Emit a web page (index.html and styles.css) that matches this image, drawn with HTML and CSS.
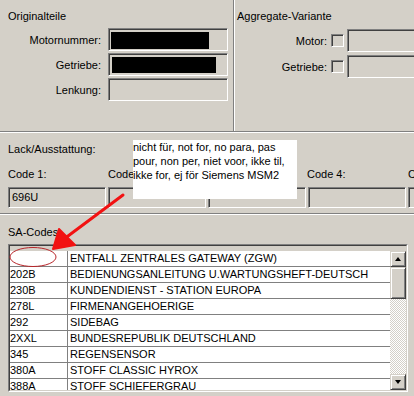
FILE: index.html
```html
<!DOCTYPE html>
<html>
<head>
<meta charset="utf-8">
<link rel="stylesheet" href="styles.css">
</head>
<body>
<div class="page">
  <div class="top">
    <div class="group group-left">
      <div class="title">Originalteile</div>
      <div class="frow">
        <span class="lbl lbl-left">Motornummer:</span>
        <div class="field field-left"><span class="redact redact-a"></span></div>
      </div>
      <div class="frow">
        <span class="lbl lbl-left">Getriebe:</span>
        <div class="field field-left"><span class="redact redact-b"></span></div>
      </div>
      <div class="frow">
        <span class="lbl lbl-left">Lenkung:</span>
        <div class="field field-left"></div>
      </div>
    </div>
    <div class="vsep"></div>
    <div class="group group-right">
      <div class="title">Aggregate-Variante</div>
      <div class="frow frow-right">
        <span class="lbl lbl-right">Motor:</span>
        <span class="check"></span>
        <div class="field field-right"></div>
      </div>
      <div class="frow frow-right">
        <span class="lbl lbl-right">Getriebe:</span>
        <span class="check"></span>
        <div class="field field-right"></div>
      </div>
    </div>
  </div>
  <div class="hsep"></div>

  <div class="lack">
    <div class="title">Lack/Ausstattung:</div>
    <div class="codes">
      <div class="code">
        <div class="code-lbl">Code 1:</div>
        <div class="field code-field">696U</div>
      </div>
      <div class="code">
        <div class="code-lbl">Code 2:</div>
        <div class="field code-field"></div>
      </div>
      <div class="code">
        <div class="code-lbl">Code 3:</div>
        <div class="field code-field"></div>
      </div>
      <div class="code">
        <div class="code-lbl code-lbl-4">Code 4:</div>
        <div class="field code-field"></div>
      </div>
      <div class="code">
        <div class="code-lbl">Code 5:</div>
        <div class="field code-field"></div>
      </div>
    </div>
  </div>
  <div class="hsep hsep-2"></div>

  <div class="sa">
    <div class="title">SA-Codes</div>
    <div class="tablebox">
      <div class="tableinner">
        <div class="thead"></div>
        <div class="tbody">
          <div class="rows">
            <div class="row"><span class="c1"></span><span class="c2">ENTFALL ZENTRALES GATEWAY (ZGW)</span></div>
            <div class="row"><span class="c1">202B</span><span class="c2">BEDIENUNGSANLEITUNG U.WARTUNGSHEFT-DEUTSCH</span></div>
            <div class="row"><span class="c1">230B</span><span class="c2">KUNDENDIENST - STATION EUROPA</span></div>
            <div class="row"><span class="c1">278L</span><span class="c2">FIRMENANGEHOERIGE</span></div>
            <div class="row"><span class="c1">292</span><span class="c2">SIDEBAG</span></div>
            <div class="row"><span class="c1">2XXL</span><span class="c2">BUNDESREPUBLIK DEUTSCHLAND</span></div>
            <div class="row"><span class="c1">345</span><span class="c2">REGENSENSOR</span></div>
            <div class="row"><span class="c1">380A</span><span class="c2">STOFF CLASSIC HYROX</span></div>
            <div class="row"><span class="c1">388A</span><span class="c2">STOFF SCHIEFERGRAU</span></div>
          </div>
          <div class="vscroll">
            <div class="sb-btn"><span class="arr arr-up"></span></div>
            <div class="sb-thumb"></div>
            <div class="sb-track"></div>
            <div class="sb-btn"><span class="arr arr-down"></span></div>
          </div>
        </div>
      </div>
    </div>
  </div>

  <div class="note">nicht für, not for, no para, pas<br>pour, non per, niet voor, ikke til,<br>ikke for, ej för Siemens MSM2</div>

  <svg class="marks" width="414" height="396" viewBox="0 0 414 396">
    <line x1="123" y1="195" x2="64" y2="239" stroke="#f21212" stroke-width="3" stroke-linecap="round"/>
    <polygon points="53,249 59,229 75,245" fill="#f21212" stroke="#f21212" stroke-width="2" stroke-linejoin="round"/>
    <ellipse cx="33" cy="257" rx="23" ry="9.5" fill="none" stroke="#b8262a" stroke-width="1"/>
  </svg>
</div>
</body>
</html>
```

FILE: styles.css
```css
html, body {
  margin: 0;
  padding: 0;
  width: 414px;
  height: 396px;
  overflow: hidden;
  background: #d4d0c8;
}

.page {
  position: relative;
  width: 414px;
  height: 396px;
  overflow: hidden;
  font-family: "Liberation Sans", Arial, sans-serif;
  font-size: 11px;
  color: #000;
  background: #d4d0c8;
}

.title {
  line-height: 14px;
  height: 14px;
  white-space: nowrap;
}

/* ---------- top groups ---------- */
.top {
  display: flex;
  height: 131px;
}

.group-left {
  width: 233px;
  flex: none;
  box-sizing: border-box;
  padding: 9px 0 0 8px;
}

.group-left .title {
  margin-bottom: 5px;
}

.vsep {
  flex: none;
  width: 0;
  border-left: 1px solid #808080;
  border-right: 1px solid #ffffff;
}

.group-right {
  flex: 1;
  box-sizing: border-box;
  padding: 9px 0 0 2px;
  white-space: nowrap;
  overflow: hidden;
}

.group-right .title {
  margin-bottom: 6px;
}

.frow {
  display: flex;
  align-items: center;
  height: 23px;
  margin-bottom: 2px;
}

.frow-right {
  margin-bottom: 3px;
}

.lbl {
  text-align: right;
  flex: none;
  white-space: nowrap;
}

.lbl-left {
  width: 93px;
  margin-right: 7px;
}

.lbl-right {
  width: 90px;
  margin-right: 4px;
}

.field {
  box-sizing: border-box;
  height: 23px;
  background: #d4d0c8;
  border-style: solid;
  border-width: 1px;
  border-color: #808080 #ffffff #ffffff #808080;
  box-shadow: inset 1px 1px 0 #404040, inset -1px -1px 0 #d4d0c8;
  flex: none;
}

.field-left {
  width: 120px;
  position: relative;
}

.field-right {
  width: 90px;
}

.redact {
  display: block;
  background: #000;
}

.redact-a {
  margin: 3px 0 0 2px;
  width: 98px;
  height: 17px;
}

.redact-b {
  margin: 3px 0 0 3px;
  width: 104px;
  height: 16px;
}

.check {
  flex: none;
  box-sizing: border-box;
  width: 13px;
  height: 13px;
  margin-right: 3px;
  background: #d4d0c8;
  border-style: solid;
  border-width: 1px;
  border-color: #808080 #ffffff #ffffff #808080;
  box-shadow: inset 1px 1px 0 #404040, inset -1px -1px 0 #d4d0c8;
}

.hsep {
  height: 0;
  border-top: 1px solid #808080;
  border-bottom: 1px solid #ffffff;
}

/* ---------- Lack ---------- */
.lack {
  padding: 9px 0 0 8px;
  height: 80px;
  box-sizing: border-box;
}

.codes {
  display: flex;
  margin-top: 11px;
  white-space: nowrap;
}

.code {
  flex: none;
  width: 100px;
}

.code-lbl {
  line-height: 14px;
  height: 14px;
  margin-bottom: 6px;
}

.code-lbl-4 {
  margin-left: -1px;
}

.code-field {
  width: 98px;
  height: 21px;
  line-height: 19px;
  padding-left: 3px;
}

/* ---------- SA codes ---------- */
.sa {
  padding: 10px 0 0 8px;
}

.sa .title {
  margin-bottom: 5px;
}

.tablebox {
  box-sizing: border-box;
  width: 400px;
  height: 148px;
  border-style: solid;
  border-width: 1px;
  border-color: #808080 #ffffff #ffffff #808080;
}

.tableinner {
  box-sizing: border-box;
  height: 146px;
  border-style: solid;
  border-width: 1px;
  border-color: #404040 #d4d0c8 #d4d0c8 #404040;
  display: flex;
  flex-direction: column;
  overflow: hidden;
}

.thead {
  height: 5px;
  flex: none;
  background: #d4d0c8;
}

.tbody {
  flex: 1;
  display: flex;
  min-height: 0;
}

.rows {
  flex: 1;
  overflow: hidden;
  background: #fff;
}

.row {
  display: flex;
  box-sizing: border-box;
  height: 16px;
  line-height: 15px;
  border-bottom: 1px solid #808080;
  white-space: nowrap;
}

.c1 {
  flex: none;
  width: 58px;
  box-sizing: border-box;
  padding-left: 0;
  border-right: 1px solid #808080;
}

.c2 {
  padding-left: 2px;
}

.vscroll {
  flex: none;
  width: 16px;
  display: flex;
  flex-direction: column;
}

.sb-btn,
.sb-thumb {
  flex: none;
  box-sizing: border-box;
  background: #d4d0c8;
  border-style: solid;
  border-width: 1px;
  border-color: #d4d0c8 #404040 #404040 #d4d0c8;
  box-shadow: inset 1px 1px 0 #ffffff, inset -1px -1px 0 #808080;
}

.sb-btn {
  height: 16px;
  display: flex;
  align-items: center;
  justify-content: center;
}

.sb-thumb {
  height: 32px;
}

.sb-track {
  flex: 1;
  background-color: #ffffff;
  background-image: conic-gradient(#d4d0c8 25%, #ffffff 0 50%, #d4d0c8 0 75%, #ffffff 0);
  background-size: 2px 2px;
}

.arr {
  width: 0;
  height: 0;
  border-left: 3.5px solid transparent;
  border-right: 3.5px solid transparent;
}

.arr-up {
  border-bottom: 4px solid #000;
}

.arr-down {
  border-top: 4px solid #000;
}

/* ---------- annotation ---------- */
.note {
  position: absolute;
  left: 133px;
  top: 140px;
  width: 164px;
  height: 59px;
  background: #ffffff;
  line-height: 14px;
  white-space: nowrap;
  overflow: hidden;
}

.marks {
  position: absolute;
  left: 0;
  top: 0;
  pointer-events: none;
}
```
